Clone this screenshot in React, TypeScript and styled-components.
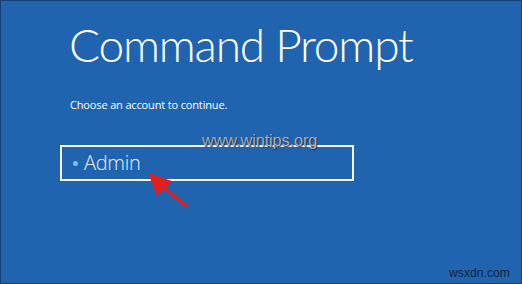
import React from "react";
import styled, { createGlobalStyle } from "styled-components";

const Global = createGlobalStyle`
  html, body { margin: 0; padding: 0; }
  body { width: 522px; height: 284px; overflow: hidden; }
`;

const Screen = styled.div`
  position: relative;
  box-sizing: border-box;
  width: 522px;
  height: 284px;
  background: #2064b0;
  border: 1px solid #16406f;
  display: flex;
  flex-direction: column;
  padding: 0 0 0 59px;
  font-family: "Open Sans", "Noto Sans", sans-serif;
  color: #ffffff;
  overflow: hidden;
`;

const Title = styled.h1`
  margin: 15px 0 0 9px;
  font-family: Lato, "Open Sans", sans-serif;
  font-weight: 300;
  font-size: 46px;
  line-height: 58px;
  letter-spacing: -1.2px;
`;

const Subtitle = styled.p`
  margin: 24px 0 0 10px;
  font-size: 11px;
  line-height: 14px;
  letter-spacing: -0.15px;
`;

const AccountBox = styled.div`
  box-sizing: border-box;
  margin-top: 33px;
  width: 294px;
  height: 36px;
  border: 2px solid #f4f7fb;
  display: flex;
  align-items: center;
  gap: 6px;
  padding-left: 11px;
`;

const Dot = styled.span`
  width: 5px;
  height: 5px;
  border-radius: 50%;
  background: #6fc2f2;
`;

const AccountName = styled.span`
  font-size: 20px;
  line-height: 24px;
  font-weight: 300;
  letter-spacing: -0.3px;
  color: #e8f0fa;
`;

const Watermark = styled.span`
  position: absolute;
  left: 201px;
  top: 130px;
  font-family: "Liberation Sans", Arial, sans-serif;
  font-size: 16.3px;
  color: #a4acbc;
  text-shadow: 1px 1px 1px #2a3140;
  letter-spacing: -0.1px;
`;

const Credit = styled.span`
  position: absolute;
  right: 11px;
  bottom: 3px;
  font-family: "Liberation Sans", Arial, sans-serif;
  font-size: 12.2px;
  color: #14243a;
`;

const Arrow = styled.svg`
  position: absolute;
  left: 0;
  top: 0;
`;

export default function App() {
  return (
    <>
      <Global />
      <Screen>
        <Title>Command Prompt</Title>
        <Subtitle>Choose an account to continue.</Subtitle>
        <AccountBox>
          <Dot />
          <AccountName>Admin</AccountName>
        </AccountBox>
        <Watermark>www.wintips.org</Watermark>
        <Credit>wsxdn.com</Credit>
        <Arrow width="522" height="284" viewBox="0 0 522 284">
          <line x1="185" y1="205" x2="162" y2="186" stroke="#e31e1e" strokeWidth="3.2" strokeLinecap="round" />
          <polygon points="147,172 171,180 156,195" fill="#e31e1e" />
        </Arrow>
      </Screen>
    </>
  );
}
